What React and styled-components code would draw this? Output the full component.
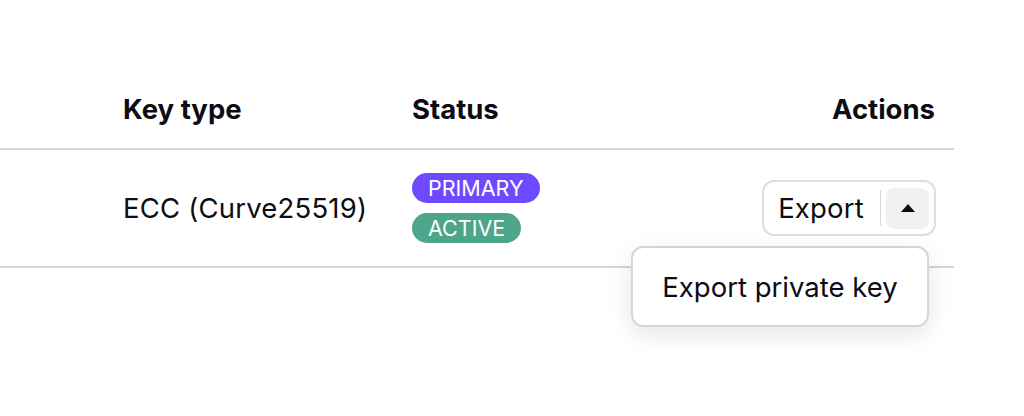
import React from "react";
import styled, { createGlobalStyle } from "styled-components";

const GlobalStyle = createGlobalStyle`
  html, body {
    margin: 0;
    padding: 0;
    background: #ffffff;
    font-family: Inter, "Noto Sans", sans-serif;
    color: #0c0c14;
  }
`;

const Page = styled.div`
  width: 1024px;
  height: 416px;
  padding-top: 70px;
  box-sizing: border-box;
`;

const Table = styled.div`
  width: 954px;
`;

const Row = styled.div`
  display: grid;
  grid-template-columns: 123px 289px 1fr;
  align-items: center;
  height: ${p => p.height}px;
  border-bottom: 2px solid #d4d4d4;
  box-sizing: border-box;
`;

const Split = styled.div`
  display: flex;
  justify-content: space-between;
  align-items: center;
`;

const HeadCell = styled.div`
  font-size: 27.5px;
  font-weight: 700;
  text-align: ${p => (p.right ? "right" : "left")};
  padding-right: ${p => (p.right ? "19px" : "0")};
`;

const Cell = styled.div`
  font-size: 27.5px;
  letter-spacing: 0.2px;
  display: flex;
  flex-direction: column;
  align-items: ${p => (p.right ? "flex-end" : "flex-start")};
  padding-right: ${p => (p.right ? "18px" : "0")};
  gap: 10px;
`;

const Badge = styled.span`
  display: inline-flex;
  align-items: center;
  height: 30px;
  padding: 0 16px;
  border-radius: 15px;
  font-size: 21.5px;
  letter-spacing: 0;
  color: #ffffff;
  background: ${p => p.color};
`;

const ActionWrap = styled.div`
  position: relative;
`;

const SplitButton = styled.div`
  display: flex;
  align-items: center;
  height: 56px;
  padding: 0 5px 0 14px;
  border: 2px solid #dedede;
  border-radius: 12px;
  box-sizing: border-box;
  background: #fff;
`;

const MainLabel = styled.span`
  font-size: 27.5px;
`;

const Divider = styled.span`
  width: 1px;
  height: 36px;
  background: #d8d8d8;
  margin: 0 5px 0 16px;
`;

const ArrowBtn = styled.span`
  width: 43px;
  height: 41px;
  border-radius: 8px;
  background: #f2f1ef;
  display: flex;
  align-items: center;
  justify-content: center;
`;

const Menu = styled.div`
  position: absolute;
  top: 66px;
  right: 7px;
  width: 298px;
  height: 81px;
  box-sizing: border-box;
  border: 2px solid #d6d6d6;
  border-radius: 12px;
  background: #fff;
  box-shadow: 0 8px 24px rgba(0, 0, 0, 0.1);
  display: flex;
  align-items: center;
  justify-content: center;
  font-size: 27.5px;
  letter-spacing: 0;
  white-space: nowrap;
`;

export default function App() {
  return (
    <Page>
      <GlobalStyle />
      <Table>
        <Row height={80}>
          <div />
          <HeadCell>Key type</HeadCell>
          <Split>
            <HeadCell>Status</HeadCell>
            <HeadCell right>Actions</HeadCell>
          </Split>
        </Row>
        <Row height={118}>
          <div />
          <Cell>ECC (Curve25519)</Cell>
          <Split>
            <Cell>
              <Badge color="#6d4aff">PRIMARY</Badge>
              <Badge color="#4da58a">ACTIVE</Badge>
            </Cell>
            <Cell right>
              <ActionWrap>
                <SplitButton>
                  <MainLabel>Export</MainLabel>
                  <Divider />
                  <ArrowBtn>
                    <svg width="14" height="8" viewBox="0 0 14 8">
                      <path d="M7 0 L14 8 L0 8 Z" fill="#0c0c14" />
                    </svg>
                  </ArrowBtn>
                </SplitButton>
                <Menu>Export private key</Menu>
              </ActionWrap>
            </Cell>
          </Split>
        </Row>
      </Table>
    </Page>
  );
}
